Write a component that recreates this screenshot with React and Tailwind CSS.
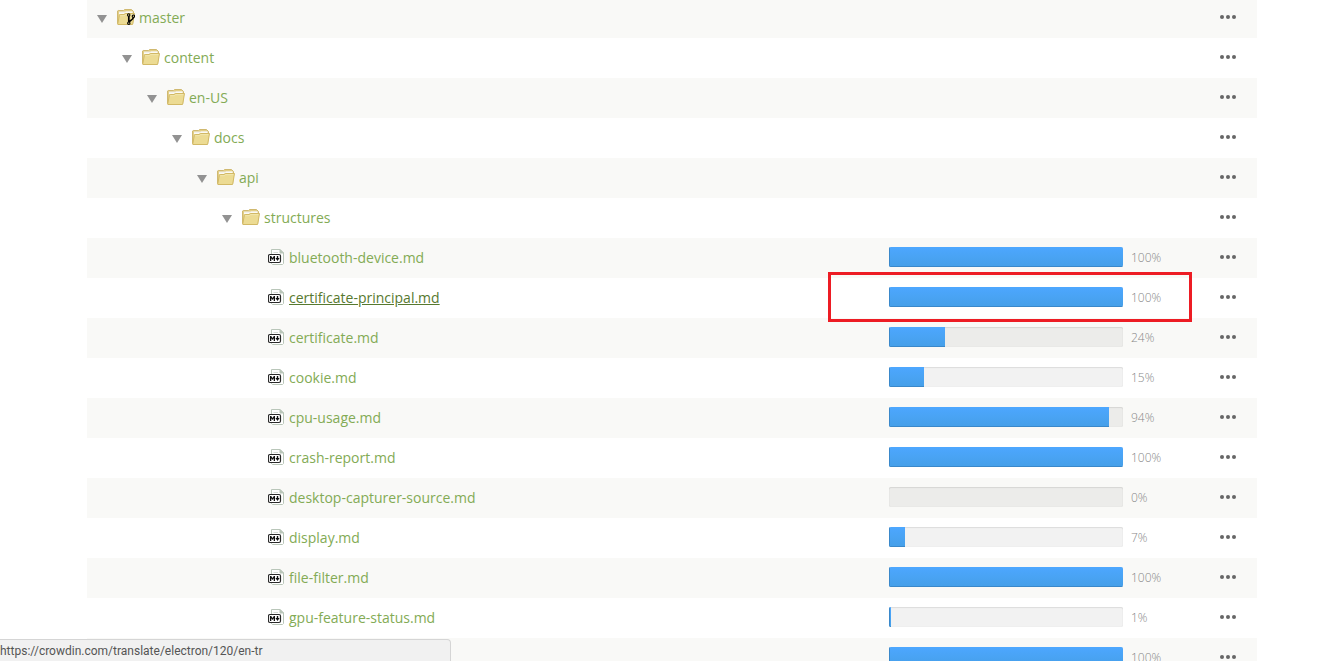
import React from "react";

const rows = [
  { name: "master", level: 0, type: "branch" },
  { name: "content", level: 1, type: "folder" },
  { name: "en-US", level: 2, type: "folder" },
  { name: "docs", level: 3, type: "folder" },
  { name: "api", level: 4, type: "folder" },
  { name: "structures", level: 5, type: "folder" },
  { name: "bluetooth-device.md", level: 6, type: "file", progress: 100 },
  {
    name: "certificate-principal.md",
    level: 6,
    type: "file",
    progress: 100,
    active: true,
  },
  { name: "certificate.md", level: 6, type: "file", progress: 24 },
  { name: "cookie.md", level: 6, type: "file", progress: 15 },
  { name: "cpu-usage.md", level: 6, type: "file", progress: 94 },
  { name: "crash-report.md", level: 6, type: "file", progress: 100 },
  { name: "desktop-capturer-source.md", level: 6, type: "file", progress: 0 },
  { name: "display.md", level: 6, type: "file", progress: 7 },
  { name: "file-filter.md", level: 6, type: "file", progress: 100 },
  { name: "gpu-feature-status.md", level: 6, type: "file", progress: 1 },
  { level: 6, type: "file", progress: 100 },
];

const FolderIcon = ({ branch }) => (
  <svg className="h-4 w-[18px] shrink-0" viewBox="0 0 18 16" aria-hidden="true">
    <path
      d="M.5 14.5V2L1.2 1.5H6.5L7.5 .5H14.5L16.5 2.5V5L15.5 15.5H1Z"
      fill="#e3cf87"
      stroke="#d0b970"
    />
    <path d="M2 2.5H15.5V5H2Z" fill="#e9e6da" />
    <path d="M2 3.5H8L9 2.5H15.5V5H2Z" fill="#fbfaf4" />
    <path
      d="M2.3 6.5L3.3 5.5H7L8.2 4.5H17.5L15.8 14.5L15 15.5H1L.8 14.8Z"
      fill="#ecdb93"
      stroke="#d2b965"
    />
    <path d="M3.3 6.7H7.6L8.7 5.6H16.4" fill="none" stroke="#f3e8b4" strokeWidth=".8" />
    {branch && (
      <g fill="none" stroke="#000">
        <path
          d="M11.8 6.5V13.5M16.4 8.3C16.3 10.6 14.6 11 12 12.6"
          strokeWidth="1.7"
        />
        <circle cx="11.7" cy="6" r="1.2" fill="#ecdb93" strokeWidth="1.1" />
        <circle cx="16.4" cy="7.2" r="1.2" fill="#ecdb93" strokeWidth="1.1" />
        <circle cx="11.8" cy="14.2" r="1.2" fill="#ecdb93" strokeWidth="1.1" />
      </g>
    )}
  </svg>
);

const MarkdownIcon = () => (
  <svg className="mx-px h-4 w-4 shrink-0" viewBox="0 0 16 16" aria-hidden="true">
    <path
      d="M3.5 .5H12L15.5 4V14.5L14.5 15.5H4.5L3.5 14.5Z"
      fill="#fff"
      stroke="#b9c6b9"
    />
    <path d="M12 .5V4H15.5Z" fill="#b9c6b9" stroke="#b9c6b9" />
    <path d="M5.5 3.5H10" stroke="#d5dbd5" />
    <rect x=".5" y="5.5" width="12" height="8" rx="1.5" fill="#fff" stroke="#2a2a2a" strokeWidth="1.2" />
    <path
      d="M2 12V7H3.2L4.5 8.9L5.8 7H7V12H5.7V9.3L4.5 11L3.3 9.3V12Z"
      fill="#111"
    />
    <path d="M8.8 7H10.2V8.9H11.6L9.5 12L7.4 8.9H8.8Z" fill="#111" />
  </svg>
);

const ProgressBar = ({ value, label }) => (
  <div className="flex items-start gap-2">
    <div
      role="progressbar"
      aria-label={label}
      aria-valuenow={value}
      className="h-5 w-[234px] overflow-hidden rounded-xs bg-black/5 shadow-[inset_0_1px_1px_rgba(0,0,0,0.08),inset_0_0_1px_rgba(0,0,0,0.12)]"
    >
      <div
        className="h-full bg-linear-to-b from-[#4da7ff] to-[#459fe8] shadow-[inset_1px_-1px_0_#3a88ca]"
        style={{ width: `${value}%` }}
      />
    </div>
    <span className="text-xs leading-[22px] font-light text-[#888]">{value}%</span>
  </div>
);

const FileRow = ({ row }) => (
  <tr className="h-10 odd:bg-[#f9f9f7]">
    <td className="p-0">
      {row.name && (
        <div
          className="flex items-center"
          style={{ paddingLeft: `${10 + row.level * 25}px` }}
        >
          {row.type === "file" ? (
            <span className="w-5" />
          ) : (
            <button type="button" aria-label={`Collapse ${row.name}`} className="w-5">
              <svg className="mt-px h-2 w-2.5" viewBox="0 0 10 8" aria-hidden="true">
                <path d="M0 0H10L5 8Z" fill="#929292" />
              </svg>
            </button>
          )}
          <span className="pb-0.5">
            {row.type === "file" ? (
              <MarkdownIcon />
            ) : (
              <FolderIcon branch={row.type === "branch"} />
            )}
          </span>
          <a
            href="#"
            className={`ml-1 text-sm ${
              row.active ? "text-[#57792f] underline" : "text-[#83ab55]"
            }`}
          >
            {row.name}
          </a>
        </div>
      )}
    </td>
    <td className="relative w-[321px] p-0">
      {row.progress !== undefined && (
        <ProgressBar value={row.progress} label={row.name || "Progress"} />
      )}
      {row.active && (
        <div className="pointer-events-none absolute -top-1.5 -bottom-1 -left-[61px] w-[364px] border-3 border-[#ed1c24]" />
      )}
    </td>
    <td className="w-[47px] p-0">
      <button type="button" aria-label="More actions" className="flex px-2.5 pt-2 pb-2.5">
        <svg className="h-1 w-4" viewBox="0 0 16 4" fill="#666" aria-hidden="true">
          <circle cx="2" cy="2" r="2" />
          <circle cx="8" cy="2" r="2" />
          <circle cx="14" cy="2" r="2" />
        </svg>
      </button>
    </td>
  </tr>
);

const App = () => {
  return (
    <div className="h-screen overflow-hidden bg-white pl-[3px] font-['Open_Sans',sans-serif]">
      <main className="mx-auto -mt-0.5 max-w-[1170px]">
        <table className="w-full table-auto border-collapse">
          <tbody>
            {rows.map((row, index) => (
              <FileRow key={index} row={row} />
            ))}
          </tbody>
        </table>
      </main>
      <div className="fixed bottom-0 left-0 flex h-[22px] w-[451px] items-center rounded-tr border-t border-r border-[#d5d5d5] bg-[#f1f1f1] font-['Roboto',sans-serif] text-xs text-[#555]">
        https://crowdin.com/translate/electron/120/en-tr
      </div>
    </div>
  );
};

export default App;
